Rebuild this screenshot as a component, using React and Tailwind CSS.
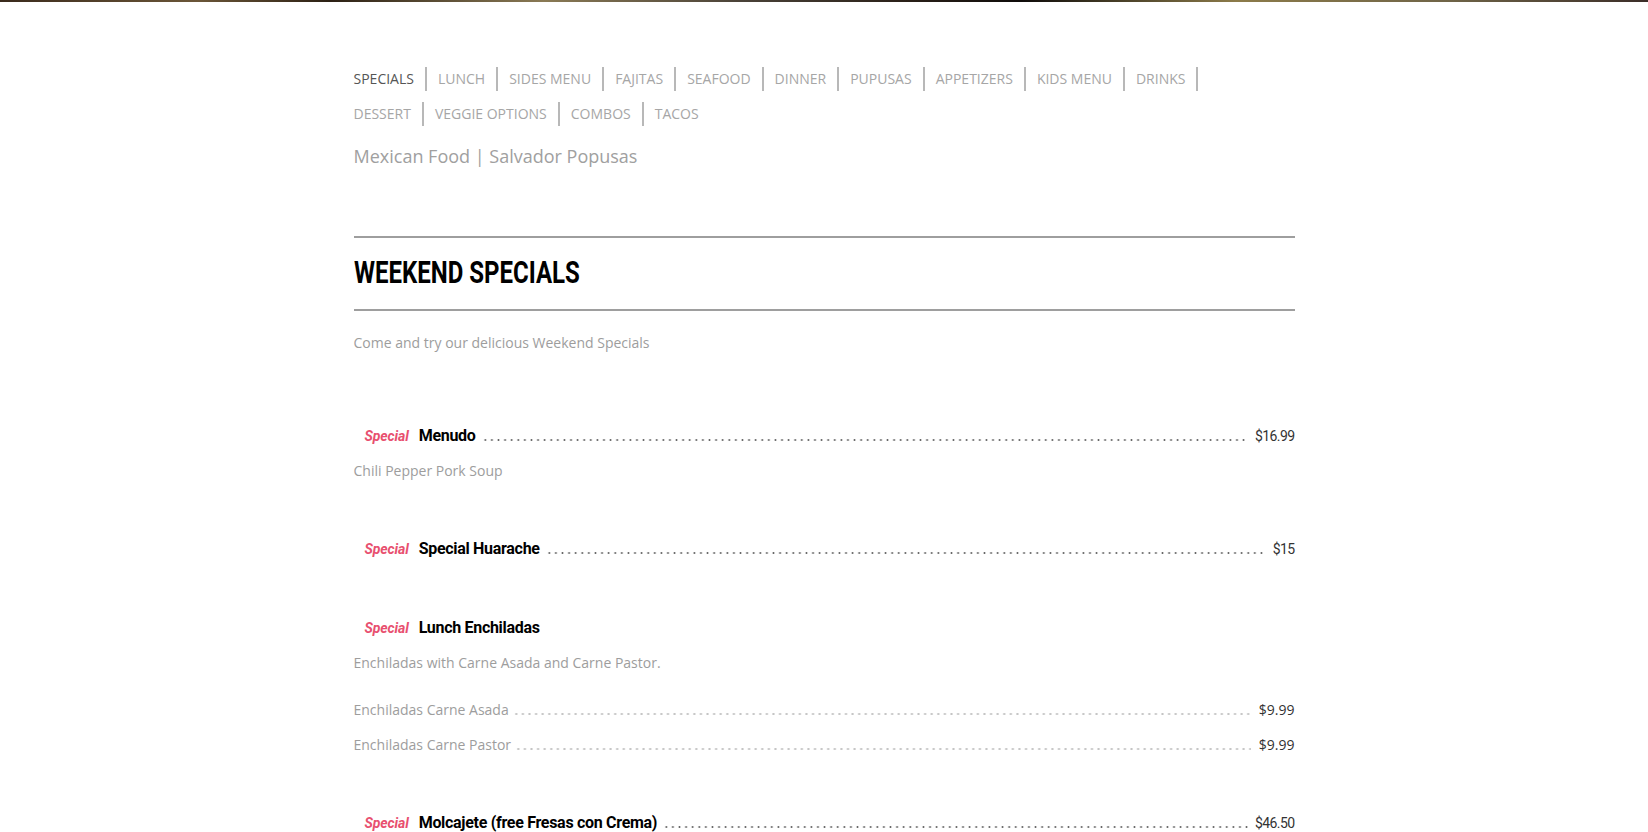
const navRows = [
  ["SPECIALS", "LUNCH", "SIDES MENU", "FAJITAS", "SEAFOOD", "DINNER", "PUPUSAS", "APPETIZERS", "KIDS MENU", "DRINKS"],
  ["DESSERT", "VEGGIE OPTIONS", "COMBOS", "TACOS"],
];

const sans = "font-['Open_Sans',sans-serif]";
const narrow = "font-['Roboto',sans-serif]";

function Leader({ light }) {
  return (
    <div
      className={
        light
          ? "flex-1 h-[4px] mb-[5px] bg-[radial-gradient(circle_at_center,#c4c4c4_0.9px,transparent_1.3px)] bg-[length:6.6px_4px] bg-repeat-x"
          : "flex-1 h-[4px] mb-[5px] bg-[radial-gradient(circle_at_center,#666_0.8px,transparent_1.2px)] bg-[length:6.6px_4px] bg-repeat-x"
      }
    />
  );
}

function SpecialRow({ name, price, className }) {
  return (
    <div className={"flex items-end h-[28px] pl-[11px] " + className}>
      <span className={narrow + " italic font-bold text-[14px] leading-[22px] tracking-[-0.1px] text-[#e8506f]"}>Special</span>
      <span className={narrow + " font-bold text-[16px] leading-[22px] tracking-[-0.3px] text-black ml-[10px] mr-[6px]"}>{name}</span>
      {price && (
        <>
          <Leader />
          <span className={narrow + " text-[14px] leading-[22px] tracking-[-0.6px] text-[#333] ml-[7px]"}>{price}</span>
        </>
      )}
    </div>
  );
}

function SubRow({ name, price, className }) {
  return (
    <div className={"flex items-end h-[24px] " + className}>
      <span className={sans + " text-[14px] leading-[22px] text-[#9d9d9d] mr-[4px]"}>{name}</span>
      <Leader light />
      <span className={sans + " text-[14px] leading-[22px] text-[#333] ml-[8px]"}>{price}</span>
    </div>
  );
}

export default function App() {
  return (
    <div className="min-h-screen bg-white">
      {/* top strip from header image */}
      <div className="h-[2px] w-full bg-[linear-gradient(90deg,#3a2a1c,#6b5638_12%,#2c2014_20%,#8a7a55_33%,#4a4238_45%,#2a2018_55%,#0f0c0a_62%,#8c7b4a_75%,#6f6447_88%,#3b2d28)]" />

      <div className="w-[941px] mx-auto pt-[59px]">
        {/* Nav */}
        {navRows.map((row, ri) => (
          <div key={ri} className="flex items-center h-[35px]">
            {row.map((item, i) => {
              const last = ri === 1 && i === row.length - 1;
              return (
                <div key={item} className="flex items-center">
                  <span
                    className={
                      sans +
                      " text-[14px] " +
                      (item === "SPECIALS" ? "text-[#555]" : "text-[#a6a6a6]")
                    }
                  >
                    {item}
                  </span>
                  {!last && <span className="w-[2px] h-[24px] bg-[#b8b8b8] mx-[11px]" />}
                </div>
              );
            })}
          </div>
        ))}

        <div className={sans + " mt-[13px] text-[18px] leading-[24px] text-[#a0a0a0]"}>
          Mexican Food | Salvador Popusas
        </div>

        {/* Section heading */}
        <div className="mt-[68px] h-[2px] bg-[#9e9e9e]" />
        <div className="h-[71px] flex items-center pb-[4px]">
          <h1
            className={
              narrow +
              " inline-block origin-left scale-x-[0.75] text-[32px] font-bold text-black"
            }
          >
            WEEKEND SPECIALS
          </h1>
        </div>
        <div className="h-[2px] bg-[#9e9e9e]" />

        <p className={sans + " mt-[22px] text-[14px] leading-[20px] text-[#9d9d9d]"}>
          Come and try our delicious Weekend Specials
        </p>

        {/* Items */}
        <SpecialRow className="mt-[66px]" name="Menudo" price="$16.99" />
        <p className={sans + " mt-[14px] text-[14px] leading-[20px] text-[#9d9d9d]"}>Chili Pepper Pork Soup</p>

        <SpecialRow className="mt-[51px]" name="Special Huarache" price="$15" />

        <SpecialRow className="mt-[51px]" name="Lunch Enchiladas" />
        <p className={sans + " mt-[14px] text-[14px] leading-[20px] text-[#9d9d9d]"}>
          Enchiladas with Carne Asada and Carne Pastor.
        </p>
        <SubRow className="mt-[24px]" name="Enchiladas Carne Asada" price="$9.99" />
        <SubRow className="mt-[11px]" name="Enchiladas Carne Pastor" price="$9.99" />

        <SpecialRow className="mt-[50px]" name="Molcajete (free Fresas con Crema)" price="$46.50" />
        <div className="h-[40px]" />
      </div>
    </div>
  );
}
